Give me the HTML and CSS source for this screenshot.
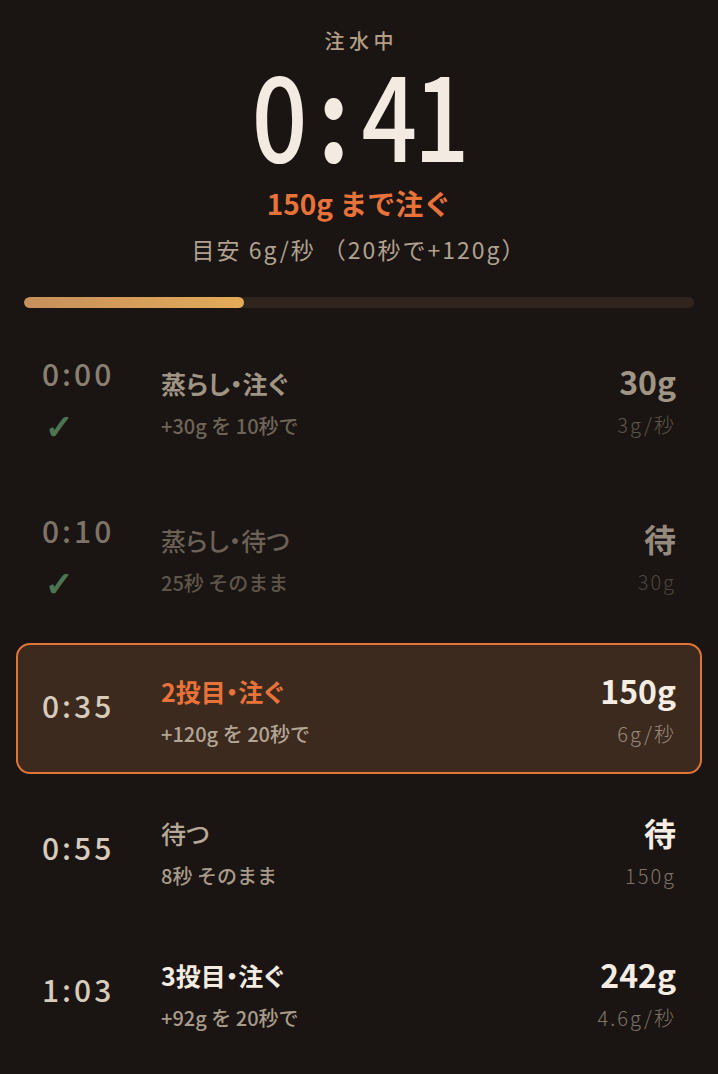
FILE: index.html
```html
<!DOCTYPE html>
<html lang="ja">
  <head>
    <meta charset="utf-8">
    <title>注水タイマー</title>
    <link rel="stylesheet" href="styles.css">
  </head>
  <body>
    <div id="app">
      <div class="status">
        <div class="status-label">注水中</div>
        <div class="status-timer">0<span class="colon">:</span>41</div>
        <div class="status-target">150g まで注ぐ</div>
        <div class="status-guide">目安 6g/秒 （20秒で+120g）</div>
      </div>

      <div class="progress">
        <div class="progress-fill" style="width: 32.8%"></div>
      </div>

      <div class="steps">
        <div class="step done">
          <div class="step-time">
            <span>0:00</span>
            <span class="step-check">✓</span>
          </div>
          <div class="step-main">
            <div class="step-title">蒸らし・注ぐ</div>
            <div class="step-sub">+30g を 10秒で</div>
          </div>
          <div class="step-amount">
            <div class="step-value">30g</div>
            <div class="step-rate">3g/秒</div>
          </div>
        </div>

        <div class="step done wait">
          <div class="step-time">
            <span>0:10</span>
            <span class="step-check">✓</span>
          </div>
          <div class="step-main">
            <div class="step-title">蒸らし・待つ</div>
            <div class="step-sub">25秒 そのまま</div>
          </div>
          <div class="step-amount">
            <div class="step-value">待</div>
            <div class="step-rate">30g</div>
          </div>
        </div>

        <div class="step active">
          <div class="step-time">0:35</div>
          <div class="step-main">
            <div class="step-title">2投目・注ぐ</div>
            <div class="step-sub">+120g を 20秒で</div>
          </div>
          <div class="step-amount">
            <div class="step-value">150g</div>
            <div class="step-rate">6g/秒</div>
          </div>
        </div>

        <div class="step wait">
          <div class="step-time">0:55</div>
          <div class="step-main">
            <div class="step-title">待つ</div>
            <div class="step-sub">8秒 そのまま</div>
          </div>
          <div class="step-amount">
            <div class="step-value">待</div>
            <div class="step-rate">150g</div>
          </div>
        </div>

        <div class="step">
          <div class="step-time">1:03</div>
          <div class="step-main">
            <div class="step-title">3投目・注ぐ</div>
            <div class="step-sub">+92g を 20秒で</div>
          </div>
          <div class="step-amount">
            <div class="step-value">242g</div>
            <div class="step-rate">4.6g/秒</div>
          </div>
        </div>
      </div>
    </div>
  </body>
</html>
```

FILE: styles.css
```css
body {
  margin: 0;
  background-color: #1a1512;
  font-family: "Noto Sans CJK JP", "Noto Sans", sans-serif;
  color: #f3ebe1;
}

#app {
  padding: 28px 16px 0;
}

.status {
  text-align: center;
}

.status-label {
  font-size: 20px;
  line-height: 26px;
  letter-spacing: 0.22em;
  padding-left: 0.22em;
  color: #b39d84;
  font-weight: 500;
}

.status-timer {
  margin-top: 1px;
  font-size: 115px;
  line-height: 115px;
  letter-spacing: -4px;
  font-weight: 500;
  color: #f3ebe1;
  transform: scaleX(0.85);
}

.status-timer .colon {
  margin: 0 18px 0 16px;
  font-weight: 700;
}

.status-target {
  margin-top: 15px;
  font-size: 28px;
  line-height: 36px;
  font-weight: 700;
  color: #e8733a;
}

.status-guide {
  margin-top: 12px;
  font-size: 23px;
  line-height: 32px;
  letter-spacing: 2px;
  color: #b0a190;
}

.progress {
  margin: 32px 8px 0;
  height: 11px;
  border-radius: 6px;
  background-color: #2f251e;
  overflow: hidden;
}

.progress-fill {
  height: 100%;
  border-radius: 6px;
  background: linear-gradient(90deg, #c5905c, #e4ab58);
}

.steps {
  display: flex;
  flex-direction: column;
  gap: 11px;
  margin-top: 21px;
}

.step {
  display: flex;
  align-items: center;
  padding: 25px 24px;
  border: 2px solid transparent;
  border-radius: 14px;
}

.step.done {
  padding-bottom: 29px;
}

.step-time {
  display: flex;
  flex-direction: column;
  width: 119px;
  padding-bottom: 8px;
  font-size: 30px;
  line-height: 34px;
  letter-spacing: 3px;
  font-weight: 500;
  color: #d8cbbb;
}

.step.done .step-time {
  padding-bottom: 0;
}

.step-check {
  margin-top: 20px;
  padding-left: 3px;
  font-family: "DejaVu Sans", sans-serif;
  font-size: 34px;
  line-height: 34px;
  color: #4d7553;
  -webkit-text-stroke: 1.2px #4d7553;
}

.step-main {
  flex: 1;
  padding-top: 6px;
}

.step-title {
  font-size: 25px;
  line-height: 30px;
  font-weight: 700;
  font-feature-settings: "palt";
  color: #f3ebe1;
}

.step-sub {
  margin-top: 15px;
  font-size: 20px;
  line-height: 26px;
  font-weight: 500;
  color: #a89b8b;
}

.step-amount {
  text-align: right;
}

.step-value {
  font-size: 32px;
  line-height: 38px;
  font-weight: 700;
  color: #f5ede3;
}

.step-rate {
  margin-top: 12px;
  font-size: 20px;
  line-height: 26px;
  font-weight: 300;
  letter-spacing: 2px;
  color: #7f7468;
}

.step.wait .step-title {
  font-weight: 500;
  color: #b5a898;
}

/* 完了したステップは暗くする */
.step.done .step-time {
  color: #8a7f73;
}

.step.done .step-title {
  color: #a09585;
}

.step.done .step-sub {
  color: #6e6458;
}

.step.done .step-value {
  color: #a09585;
}

.step.done .step-rate {
  color: #5e554b;
}

.step.done.wait .step-time {
  color: #7d7368;
}

.step.done.wait .step-title {
  color: #6b6157;
}

.step.done.wait .step-sub {
  color: #5e554b;
}

.step.done.wait .step-value {
  color: #948a7e;
}

.step.done.wait .step-rate {
  color: #4d453d;
}

.step.active {
  background-color: #3c2a1f;
  border-color: #e07438;
}

.step.active .step-title {
  color: #e8733a;
}

.step.active .step-sub {
  color: #b3a596;
}

.step.active .step-rate {
  color: #9a8c7d;
}
```
